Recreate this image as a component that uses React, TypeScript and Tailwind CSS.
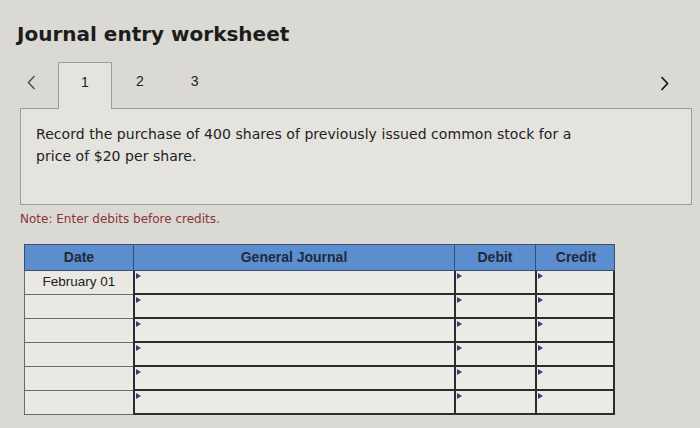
import React from "react";

const Tri = () => (
  <span className="absolute left-[1px] top-[2px] w-0 h-0 border-y-[3.5px] border-y-transparent border-l-[5px] border-l-[#2a4674]" />
);

export default function App() {
  const rows = ["February 01", "", "", "", "", ""];
  return (
    <div className="w-[700px] h-[428px] bg-[#dad9d4] overflow-hidden relative" style={{ fontFamily: "'DejaVu Sans', Verdana, sans-serif" }}>
      <div className="pt-[21px] pl-[17px]">
        <h1 className="text-[20px] leading-[26px] font-bold text-[#1c1c1c] tracking-[0px]">Journal entry worksheet</h1>
      </div>
      <div className="mt-[15px] flex items-stretch h-[46px] relative">
        <div className="w-[58px] flex items-center pl-[27px] pb-[6px]">
          <svg width="9" height="15" viewBox="0 0 9 15" className="text-[#555]">
            <path d="M7.5 1 L1.5 7.5 L7.5 14" fill="none" stroke="currentColor" strokeWidth="1.6" />
          </svg>
        </div>
        <div className="w-[54px] border border-b-0 border-[#9d9d99] bg-[#e4e3de] relative z-10 -mb-px flex items-center justify-center pb-[8px]" style={{ fontFamily: "'Liberation Sans', Arial, sans-serif" }}>
          <span className="text-[14px] text-[#222]">1</span>
        </div>
        <div className="flex items-center pb-[8px]" style={{ fontFamily: "'Liberation Sans', Arial, sans-serif" }}>
          <span className="text-[14px] text-[#222] ml-[24px]">2</span>
          <span className="text-[14px] text-[#222] ml-[47px]">3</span>
        </div>
        <div className="ml-auto w-[40px] flex items-center pb-[4px]">
          <svg width="9" height="15" viewBox="0 0 9 15" className="text-[#1a1a1a]">
            <path d="M1.5 1 L7.5 7.5 L1.5 14" fill="none" stroke="currentColor" strokeWidth="1.8" />
          </svg>
        </div>
      </div>
      <div className="ml-[20px] w-[672px] h-[97px] border border-[#9d9d99] bg-[#e4e3de] pl-[15px] pt-[14px]">
        <p className="text-[14px] leading-[22px] text-[#222] tracking-[0.05px]">
          Record the purchase of 400 shares of previously issued common stock for a<br />price of $20 per share.
        </p>
      </div>
      <p className="ml-[20px] mt-[6px] text-[12px] leading-[16px] text-[#8a3434]">Note: Enter debits before credits.</p>
      <div className="ml-[24px] mt-[17px] w-[591px]" style={{ fontFamily: "'Liberation Sans', Arial, sans-serif" }}>
        <div className="grid grid-cols-[109px_321px_81px_80px] h-[27px] bg-[#5c8ecf] border border-[#3a4e6e] text-[14px] font-bold text-[#1e2a3c]">
          <div className="flex items-center justify-center border-r border-[#3a4e6e]">Date</div>
          <div className="flex items-center justify-center border-r border-[#3a4e6e]">General Journal</div>
          <div className="flex items-center justify-center border-r border-[#3a4e6e]">Debit</div>
          <div className="flex items-center justify-center">Credit</div>
        </div>
        {rows.map((d, i) => (
          <div key={i} className="grid grid-cols-[109px_321px_81px_80px] h-[24px]">
            <div className="border-l border-b border-[#6c6c6a] bg-[#e9e8e3] flex items-center justify-center text-[13.5px] text-[#222]">{d}</div>
            <div className="relative border-l-2 border-b-2 border-[#2c2c2c] bg-[#ebeae5]"><Tri /></div>
            <div className="relative border-l-2 border-b-2 border-[#2c2c2c] bg-[#ebeae5]"><Tri /></div>
            <div className="relative border-l-2 border-r-2 border-b-2 border-[#2c2c2c] bg-[#ebeae5]"><Tri /></div>
          </div>
        ))}
      </div>
    </div>
  );
}
